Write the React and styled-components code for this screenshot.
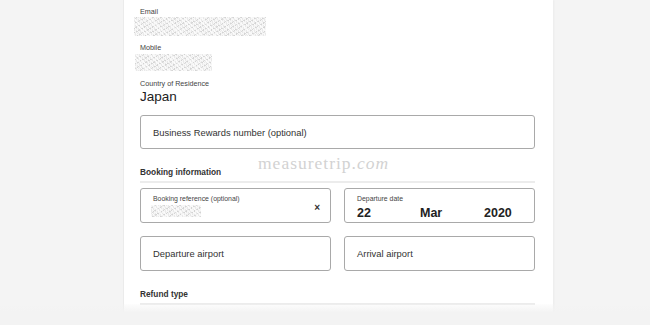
import styled, { createGlobalStyle } from 'styled-components';

const GlobalStyle = createGlobalStyle`
  html, body {
    margin: 0;
    padding: 0;
    background: #f4f4f4;
    font-family: "Liberation Sans", Arial, sans-serif;
    color: #222;
  }
`;

const Page = styled.div`
  position: relative;
  width: 650px;
  height: 325px;
  overflow: hidden;
  background: #f4f4f4;
`;

const Panel = styled.div`
  margin-left: 123px;
  width: 430px;
  height: 325px;
  box-sizing: border-box;
  background: #fff;
  border-left: 1px solid #ebebeb;
  box-shadow: 1px 0 2px rgba(0, 0, 0, 0.04);
  padding: 7px 18px 0 16px;
  display: flex;
  flex-direction: column;
`;

const Label = styled.div`
  font-size: 7.2px;
  line-height: 9px;
  color: #444;
`;

const Masked = styled.div`
  margin-left: ${(p) => p.$offset || 0}px;
  margin-top: ${(p) => p.$mt || 0}px;
  width: ${(p) => p.$w}px;
  height: ${(p) => p.$h}px;
  background-color: #e9e9e9;
  background-image:
    repeating-linear-gradient(45deg, rgba(255,255,255,0.7) 0 1px, transparent 1px 3px),
    repeating-linear-gradient(-30deg, rgba(190,190,190,0.5) 0 1px, transparent 1px 4px),
    repeating-linear-gradient(80deg, rgba(255,255,255,0.6) 0 1px, transparent 1px 2px);
`;

const Field = styled.div`
  display: flex;
  flex-direction: column;
  gap: ${(p) => p.$gap || 1}px;
  margin-bottom: ${(p) => p.$mb || 0}px;
`;

const Value = styled.div`
  font-size: 13.5px;
  line-height: 15px;
  color: #222;
`;

const Box = styled.div`
  box-sizing: border-box;
  height: ${(p) => p.$h || 35}px;
  border: 1px solid #a9a9a9;
  border-radius: 3px;
  padding: 0 12px;
  display: flex;
  align-items: center;
  font-size: 9.4px;
  color: #333;
  position: relative;
`;

const SectionTitle = styled.div`
  margin-top: ${(p) => p.$mt || 0}px;
  font-size: 8.3px;
  font-weight: bold;
  color: #333;
  line-height: 11px;
  padding-bottom: 3px;
  border-bottom: 2px solid #ececec;
`;

const Grid = styled.div`
  margin-top: 5px;
  display: grid;
  grid-template-columns: 1fr 1fr;
  column-gap: 13px;
  row-gap: 13px;
`;

const Stacked = styled(Box)`
  flex-direction: column;
  align-items: stretch;
  justify-content: flex-start;
  padding-top: 6px;
`;

const SmallLabel = styled.div`
  font-size: 6.9px;
  line-height: 8px;
  color: #444;
`;

const Clear = styled.span`
  position: absolute;
  right: 10px;
  top: 13px;
  font-size: 10px;
  font-weight: bold;
  color: #333;
`;

const DateRow = styled.div`
  display: grid;
  grid-template-columns: 63px 64px auto;
  margin-top: 3px;
  font-size: 12.5px;
  font-weight: bold;
  color: #222;
`;

const Watermark = styled.div`
  position: absolute;
  left: 258px;
  top: 153px;
  font-family: "Liberation Serif", serif;
  font-size: 17.5px;
  letter-spacing: 1px;
  color: #d2d2d2;
  span {
    font-style: italic;
  }
`;

const Fade = styled.div`
  position: absolute;
  left: 0;
  right: 0;
  bottom: 0;
  height: 21px;
  background: linear-gradient(to bottom, rgba(244,244,244,0.2), #f3f3f3 40%, #f3f3f3);
`;

const Ghost = styled.div`
  margin-top: 8px;
  height: 4px;
  width: 230px;
  background: #e4e4e4;
`;

export default function App() {
  return (
    <Page>
      <GlobalStyle />
      <Panel>
        <Field $mb={7}>
          <Label>Email</Label>
          <Masked $offset={-6} $w={132} $h={19} />
        </Field>
        <Field $mb={8} $gap={2}>
          <Label>Mobile</Label>
          <Masked $offset={-5} $w={77} $h={17} />
        </Field>
        <Field $mb={11}>
          <Label>Country of Residence</Label>
          <Value>Japan</Value>
        </Field>
        <Box $h={34}>Business Rewards number (optional)</Box>
        <SectionTitle $mt={18}>Booking information</SectionTitle>
        <Grid>
          <Stacked>
            <SmallLabel>Booking reference (optional)</SmallLabel>
            <Masked $offset={-2} $mt={2} $w={50} $h={12} />
            <Clear>×</Clear>
          </Stacked>
          <Stacked>
            <SmallLabel>Departure date</SmallLabel>
            <DateRow>
              <span>22</span>
              <span>Mar</span>
              <span>2020</span>
            </DateRow>
          </Stacked>
          <Box>Departure airport</Box>
          <Box>Arrival airport</Box>
        </Grid>
        <SectionTitle $mt={18}>Refund type</SectionTitle>
        <Ghost />
      </Panel>
      <Watermark>
        measuretrip.<span>com</span>
      </Watermark>
      <Fade />
    </Page>
  );
}
